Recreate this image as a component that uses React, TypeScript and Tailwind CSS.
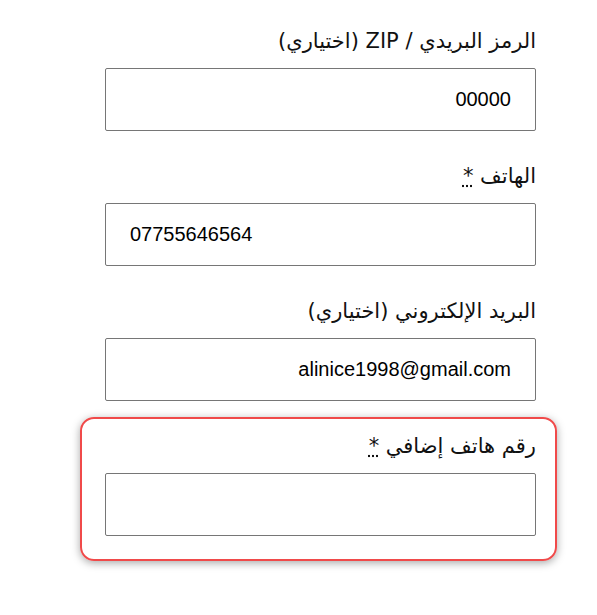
import React from "react"

const labelCls = "block text-[21px] leading-[26px] mb-[14px] text-[#111] [font-family:'DejaVu_Sans',sans-serif]"
const inputCls = "block w-full h-[63px] border border-[#767676] rounded-[2px] px-[24px] text-[20px] text-black bg-white [font-family:'Liberation_Sans',Arial,sans-serif] outline-none"

function Req() {
  return <span className="underline decoration-dotted underline-offset-2" title="مطلوب">*</span>
}

export default function App() {
  return (
    <div className="min-h-[615px] bg-white pl-[105px] pt-[28px]">
      <div className="w-[431px]" dir="rtl">
        <div>
          <label className={labelCls}>الرمز البريدي / ZIP (اختياري)</label>
          <input className={inputCls} defaultValue="00000" />
        </div>

        <div className="mt-[32px]">
          <label className={labelCls}>
            الهاتف <Req />
          </label>
          <input className={inputCls} dir="ltr" defaultValue="07755646564" />
        </div>

        <div className="mt-[32px]">
          <label className={labelCls}>البريد الإلكتروني (اختياري)</label>
          <input className={inputCls} defaultValue="alinice1998@gmail.com" />
        </div>

        {/* الحقل المطلوب مميز بإطار أحمر */}
        <div className="mt-[16px] ml-[-25px] mr-[-21px] border-2 border-[#f04a4a] rounded-[14px] pt-[14px] pb-[23px] pl-[23px] pr-[19px] shadow-[0_2px_8px_rgba(0,0,0,0.35)]">
          <label className={labelCls}>
            رقم هاتف إضافي <Req />
          </label>
          <input className={inputCls} type="tel" />
        </div>
      </div>
    </div>
  )
}
